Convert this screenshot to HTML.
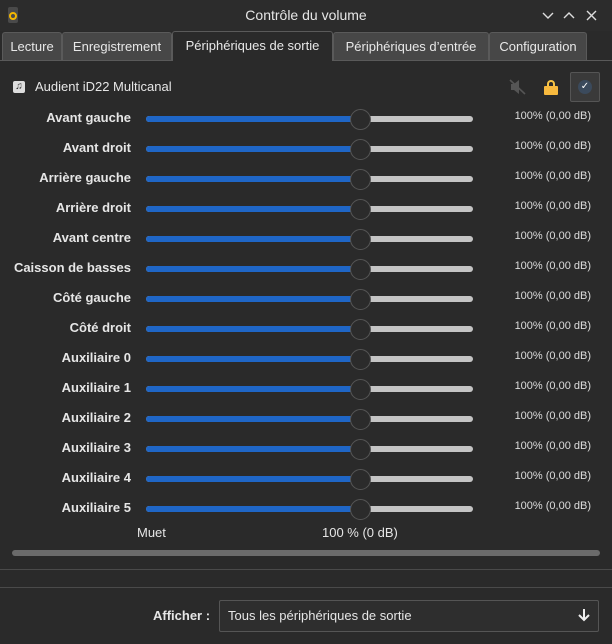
<!DOCTYPE html>
<html><head><meta charset="utf-8"><style>
*{margin:0;padding:0;box-sizing:border-box}
body{width:612px;height:644px;background:#2a2a2a;font-family:"Liberation Sans","DejaVu Sans",sans-serif;color:#e6e6e6;position:relative;overflow:hidden;font-size:13px}
.a{position:absolute}
.tab{position:absolute;top:32px;height:28px;background:#474747;border:1px solid #5a5a5a;border-bottom:none;border-radius:3px 3px 0 0;font-size:13px;line-height:27px;text-align:center;color:#e8e8e8}
.lbl{position:absolute;right:481px;font-weight:bold;font-size:13px;text-align:right;white-space:nowrap}
.tr{position:absolute;left:146px;width:327px;height:6px;border-radius:3px;background:#c4c4c4}
.tr i{position:absolute;left:0;top:0;height:6px;width:214px;background:#1f66c6;border-radius:3px}
.th{position:absolute;width:21px;height:21px;border-radius:50%;background:#2b2b2b;border:1px solid #555;left:350px}
.val{position:absolute;right:21px;font-size:11px;color:#ddd}
</style></head><body>
<div class="a" style="left:0;top:0;width:612px;height:31px;background:#2c2c2c"></div>
<div class="a" style="left:8px;top:7px;width:10px;height:16px;background:#4a4a4a;border-radius:2px"></div>
<div class="a" style="left:9px;top:12px;width:8px;height:8px;border-radius:50%;border:2px solid #f5b800"></div>
<div class="a" style="left:0;top:7px;width:612px;text-align:center;font-size:14px">Contrôle du volume</div>
<svg class="a" style="left:540px;top:9px" width="62" height="14" stroke="#ddd" stroke-width="1.4" fill="none"><path d="M3 4l5 5 5-5M24 9l5-5 5 5M47 2l9 9M56 2l-9 9"/></svg>
<div class="tab" style="left:2px;width:60px">Lecture</div>
<div class="tab" style="left:62px;width:110px">Enregistrement</div>
<div class="tab" style="left:172px;width:161px;background:#2a2a2a;top:31px;height:30px">Périphériques de sortie</div>
<div class="tab" style="left:333px;width:156px">Périphériques d’entrée</div>
<div class="tab" style="left:489px;width:98px">Configuration</div>
<div class="a" style="left:0;top:60px;width:172px;height:1px;background:#5a5a5a"></div>
<div class="a" style="left:333px;top:60px;width:279px;height:1px;background:#5a5a5a"></div>
<div class="a" style="left:13px;top:81px;width:12px;height:12px;background:#ddd;border-radius:2px;color:#2a2a2a;font-size:10px;line-height:12px;text-align:center">♫</div>
<div class="a" style="left:35px;top:79px;font-size:13px">Audient iD22 Multicanal</div>
<svg class="a" style="left:509px;top:79px" width="18" height="16"><path d="M2 5h3l5-4v14l-5-4H2z" fill="#555"/><path d="M1 1l15 14" stroke="#555" stroke-width="1.6"/></svg>
<div class="a" style="left:544px;top:80px;width:14px;height:14px"><div style="position:absolute;left:3px;top:0;width:8px;height:8px;border:2px solid #f7c445;border-bottom:none;border-radius:4px 4px 0 0"></div><div style="position:absolute;left:0;top:6px;width:14px;height:9px;background:#f7b93e;border-radius:1px"></div></div>
<div class="a" style="left:570px;top:72px;width:30px;height:30px;border:1px solid #555;border-radius:2px;background:#3a3a3a"></div>
<div class="a" style="left:578px;top:80px;width:14px;height:14px;border-radius:50%;background:#3b4a5c;color:#fff;font-size:10px;line-height:14px;text-align:center">✓</div>
<div id="rows"></div>
<script>
const n=["Avant gauche","Avant droit","Arrière gauche","Arrière droit","Avant centre","Caisson de basses","Côté gauche","Côté droit","Auxiliaire 0","Auxiliaire 1","Auxiliaire 2","Auxiliaire 3","Auxiliaire 4","Auxiliaire 5"];
let h="";n.forEach((t,i)=>{const y=119+30*i;
h+=`<div class="lbl" style="top:${y-9}px">${t}</div><div class="tr" style="top:${y-3}px"><i></i></div><div class="th" style="top:${y-10}px"></div><div class="val" style="top:${y-9}px">100% (0,00 dB)</div>`});
document.getElementById("rows").innerHTML=h;
</script>
<div class="a" style="left:137px;top:525px">Muet</div>
<div class="a" style="left:322px;top:525px">100 % (0 dB)</div>
<div class="a" style="left:12px;top:550px;width:588px;height:6px;border-radius:3px;background:#6b6b6b"></div>
<div class="a" style="left:0;top:569px;width:612px;height:1px;background:#4a4a4a"></div>
<div class="a" style="left:0;top:587px;width:612px;height:1px;background:#4a4a4a"></div>
<div class="a" style="left:153px;top:608px;font-weight:bold;font-size:13px">Afficher :</div>
<div class="a" style="left:219px;top:600px;width:380px;height:32px;border:1px solid #555;border-radius:2px;background:#2e2e2e"></div>
<div class="a" style="left:228px;top:608px;font-size:13px">Tous les périphériques de sortie</div>
<svg class="a" style="left:578px;top:608px" width="12" height="14" stroke="#eee" stroke-width="2" fill="none"><path d="M6 1v11M1 7l5 5 5-5"/></svg>
</body></html>
